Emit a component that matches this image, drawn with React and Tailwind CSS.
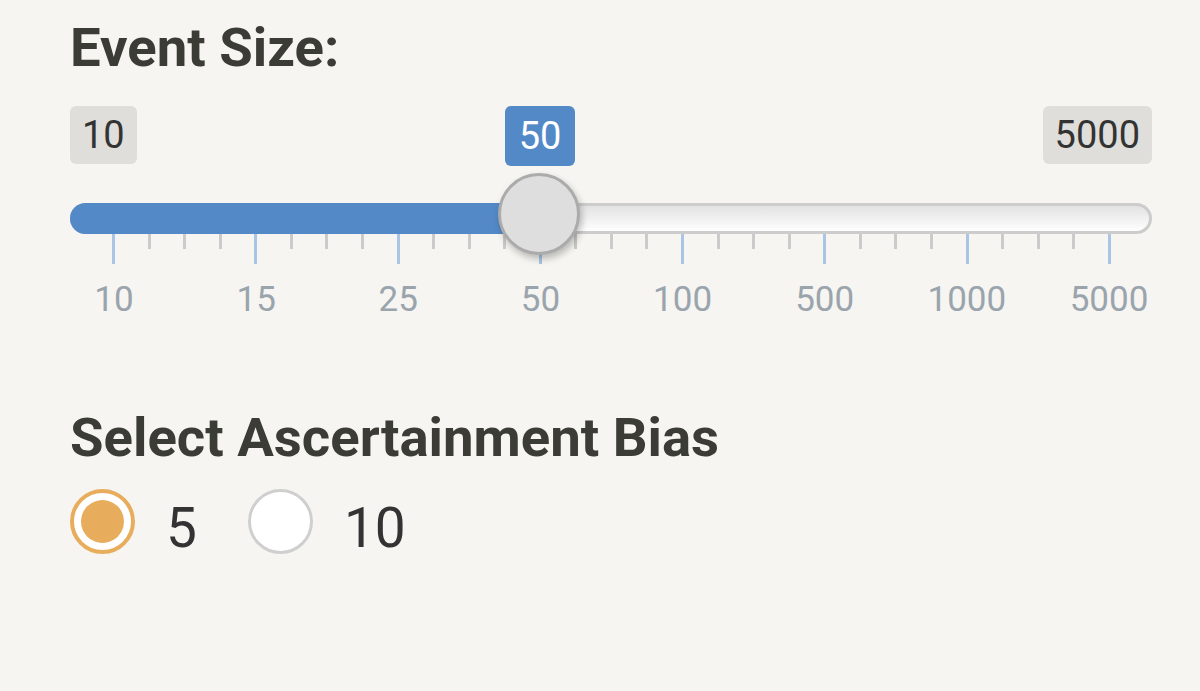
const ticks = Array.from({ length: 29 }, (_, i) => i % 4 === 0);
const gridLabels = ['10', '15', '25', '50', '100', '500', '1000', '5000'];

function Radio({ checked, label }) {
  return (
    <div className="flex items-start gap-[31px]">
      {checked ? (
        <div className="w-[65px] h-[65px] rounded-full border-[4px] border-[#e8ad5c] bg-white flex items-center justify-center">
          <div className="w-[43px] h-[43px] rounded-full bg-[#e8ad5c]" />
        </div>
      ) : (
        <div className="w-[65px] h-[65px] rounded-full border-[3px] border-[#cfcfcf] bg-white" />
      )}
      <span className="mt-[12px] text-[55px] leading-none text-[#333333]">{label}</span>
    </div>
  );
}

export default function App() {
  return (
    <div className="min-h-screen bg-[#f6f5f1] pl-[70px] pt-[20px] font-['Roboto',sans-serif]">
      <div className="w-[1082px]">
        <div className="text-[54.5px] font-bold leading-none text-[#3c3c36]">Event Size:</div>

        {/* slider labels */}
        <div className="relative mt-[31px] h-[60px] flex justify-between items-start">
          <div className="h-[58px] leading-[58px] px-[12px] rounded-[6px] bg-[#dfdeda] text-[38px] text-[#333333]">10</div>
          <div className="absolute left-[435px] top-0 h-[60px] w-[70px] leading-[60px] text-center rounded-[6px] bg-[#5489c7] text-[38px] text-white">50</div>
          <div className="h-[58px] leading-[58px] px-[12px] rounded-[6px] bg-[#dfdeda] text-[38px] text-[#333333]">5000</div>
        </div>

        {/* track */}
        <div className="relative mt-[37px] h-[31px]">
          <div className="absolute inset-0 rounded-full border-[3px] border-[#cccccc] bg-linear-to-b from-[#e2e2e2] to-white" />
          <div className="absolute left-0 top-0 h-full w-[470px] rounded-l-full bg-[#5489c7]" />
          <div className="absolute left-[428px] top-[-30px] w-[82px] h-[82px] rounded-full border-[3px] border-[#ababab] bg-[#dedede] shadow-[2px_4px_7px_rgba(0,0,0,0.25)] z-10" />
        </div>

        {/* grid ticks */}
        <div className="ml-[42px] w-[999px] flex justify-between items-start">
          {ticks.map((major, i) => (
            <div key={i} className={major ? 'w-[3px] h-[30px] bg-[#a9c5e5]' : 'w-[3px] h-[15px] bg-[#cbcbcb]'} />
          ))}
        </div>
        <div className="mt-[18px] ml-[4px] w-[1075px] flex justify-between">
          {gridLabels.map((t) => (
            <div key={t} className="w-[80px] text-center text-[35px] leading-none text-[#9aa4ad]">{t}</div>
          ))}
        </div>

        <div className="mt-[93px] text-[54.5px] font-bold leading-none text-[#3c3c36]">Select Ascertainment Bias</div>
        <div className="mt-[25px] flex items-start gap-[51px]">
          <Radio checked label="5" />
          <Radio label="10" />
        </div>
      </div>
    </div>
  );
}
